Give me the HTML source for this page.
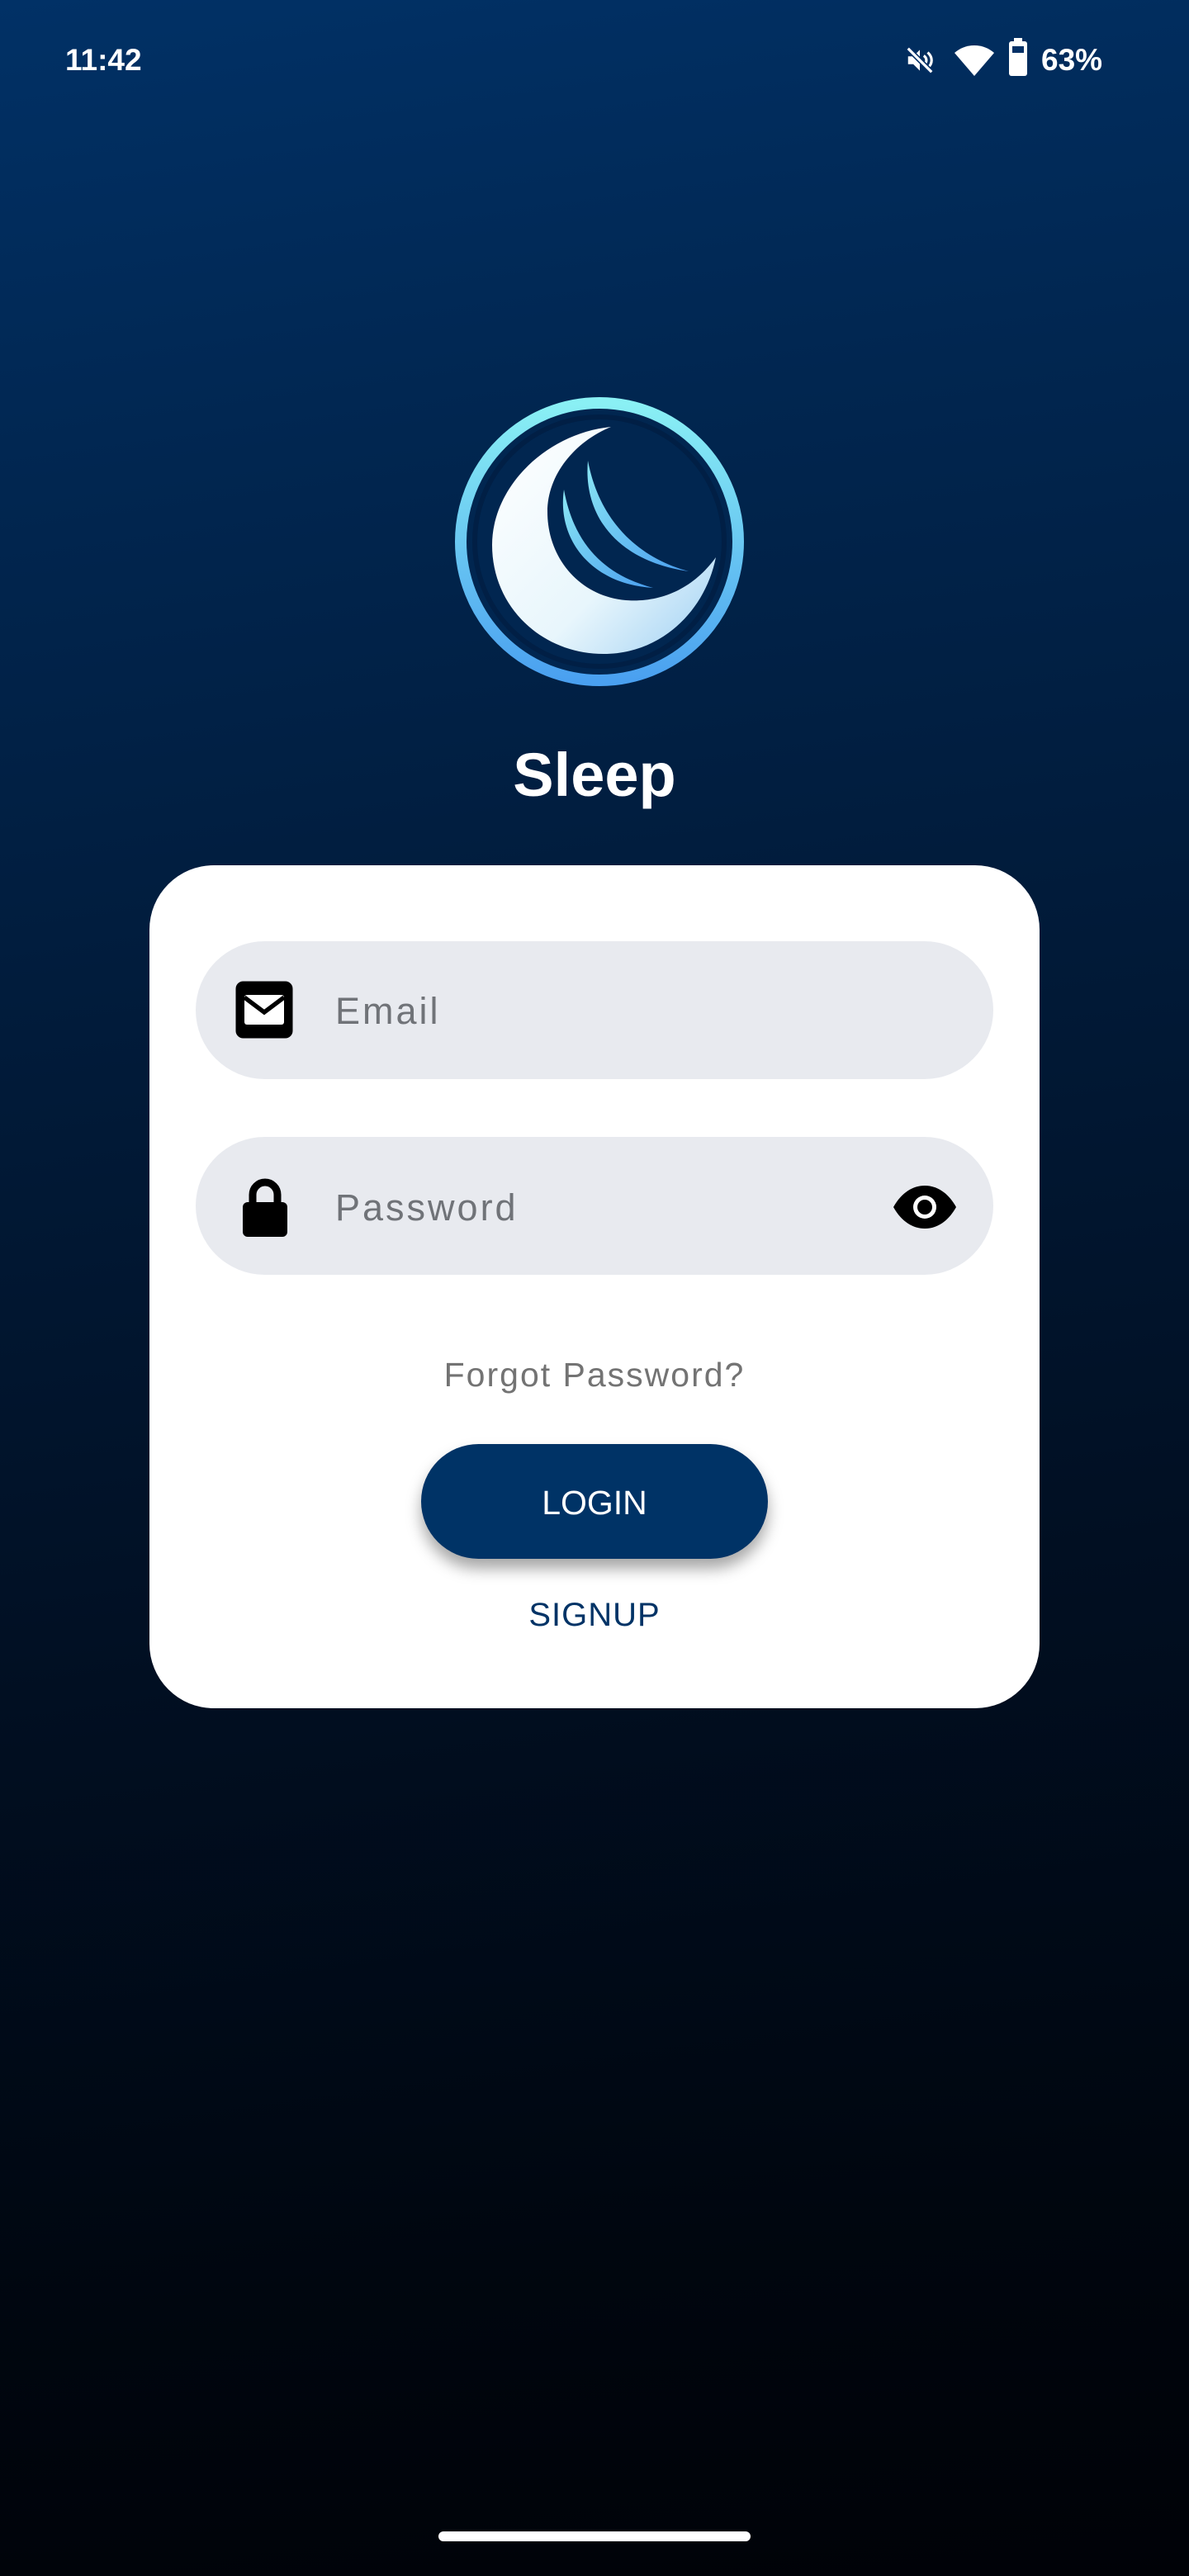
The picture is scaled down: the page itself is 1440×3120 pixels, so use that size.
<!DOCTYPE html>
<html><head><meta charset="utf-8"><style>
html,body{margin:0;padding:0}
body{width:1440px;height:3120px;position:relative;overflow:hidden;font-family:"Liberation Sans",sans-serif;
background:linear-gradient(172deg,#013166 0%,#012650 18%,#011b3a 38%,#010f22 62%,#00060f 85%,#000207 100%);}
.a{position:absolute}
.status{color:#fff;font-size:37px;font-weight:bold;top:52px}
.card{left:181px;top:1048px;width:1078px;height:1021px;background:#fff;border-radius:78px}
.field{left:237px;width:966px;height:167px;background:#e8eaef;border-radius:84px}
.ph{color:#707378;font-size:45px;letter-spacing:3px;left:406px}
.c{width:1440px;left:0;text-align:center}
</style></head><body>
<div class="a status" style="left:79px">11:42</div>
<div class="a" style="left:1094px;top:54px">
<svg width="40" height="38" viewBox="0 0 24 24"><path d="M3 9v6h4l5 5V4L7 9H3z" fill="#fff"/><path d="M15 8.5c1.5 1 2 2.5 2 3.5s-.5 2.5-2 3.5M18 6c2 1.8 3 3.8 3 6s-1 4.2-3 6" stroke="#fff" stroke-width="2" fill="none"/><path d="M3 3l18 18" stroke="#023066" stroke-width="4"/><path d="M3 3l18 18" stroke="#fff" stroke-width="2"/></svg></div>
<div class="a" style="left:1156px;top:54px">
<svg width="48" height="40" viewBox="0 0 24 20"><path d="M12 19L0 5C3 2.3 7.3 0.5 12 0.5S21 2.3 24 5z" fill="#fff"/></svg></div>
<div class="a" style="left:1222px;top:50px;width:22px;height:42px;background:#fff;border-radius:3px"></div>
<div class="a" style="left:1228px;top:46px;width:10px;height:6px;background:#fff"></div>
<div class="a" style="left:1226px;top:56px;width:14px;height:8px;background:#023066"></div>
<div class="a status" style="left:1261px">63%</div>

<svg class="a" style="left:546px;top:480px" width="360" height="360" viewBox="0 0 360 360">
<defs>
<linearGradient id="ring" x1="0" y1="0" x2="0" y2="1"><stop offset="0" stop-color="#8af0f4"/><stop offset="1" stop-color="#4aa0f0"/></linearGradient>
<linearGradient id="moon" x1="0" y1="0" x2="1" y2="1"><stop offset="0" stop-color="#ffffff"/><stop offset="0.6" stop-color="#e8f6fc"/><stop offset="1" stop-color="#9fd0f3"/></linearGradient>
<linearGradient id="arc" x1="0" y1="0" x2="1" y2="1"><stop offset="0" stop-color="#8ae6f4"/><stop offset="1" stop-color="#4a9ff0"/></linearGradient>
</defs>
<circle cx="180" cy="176" r="168" fill="#012650" stroke="url(#ring)" stroke-width="14"/>
<circle cx="180" cy="176" r="151" fill="none" stroke="#011f45" stroke-width="6"/>
<path d="M194 37 C115 45 50 110 50 180 C50 255 110 312 185 312 C255 312 308 260 321 195 C292 235 252 250 212 247 C155 242 117 195 117 140 C117 95 150 55 194 37 Z" fill="url(#moon)"/>
<path d="M137 113 C128 175 172 228 245 232 C192 218 150 185 137 113 Z" fill="url(#arc)"/>
<path d="M166 78 C160 145 202 200 288 212 C228 196 180 152 166 78 Z" fill="url(#arc)"/>
</svg>

<div class="a c" style="top:896px;color:#fff;font-size:74px;font-weight:bold">Sleep</div>

<div class="a card"></div>
<div class="a field" style="top:1140px"></div>
<div class="a field" style="top:1377px"></div>
<svg class="a" style="left:284px;top:1187px" width="72" height="72" viewBox="0 0 24 24"><rect x="0.5" y="0.5" width="23" height="23" rx="3" fill="#000"/><rect x="4" y="6" width="16" height="12" rx="1" fill="#fff"/><path d="M4 7l8 6 8-6" stroke="#000" stroke-width="1.8" fill="none"/></svg>
<div class="a ph" style="top:1199px">Email</div>
<svg class="a" style="left:290px;top:1426px" width="62" height="72" viewBox="0 0 20 24"><path d="M5 11V7a5 5 0 0 1 10 0v4" stroke="#000" stroke-width="3" fill="none"/><rect x="1" y="10" width="18" height="14" rx="2" fill="#000"/></svg>
<div class="a ph" style="top:1437px">Password</div>
<svg class="a" style="left:1080px;top:1434px" width="80" height="56" viewBox="0 0 40 28"><path d="M1 14C6 5 13 1 20 1s14 4 19 13c-5 9-12 13-19 13S6 23 1 14z" fill="#000"/><circle cx="20" cy="14" r="7" fill="#fff"/><circle cx="20" cy="14" r="4.5" fill="#000"/></svg>

<div class="a c" style="top:1642px;color:#737373;font-size:41px;letter-spacing:2px">Forgot Password?</div>
<div class="a" style="left:510px;top:1749px;width:420px;height:139px;background:#003366;border-radius:70px;box-shadow:0 12px 18px rgba(0,0,0,.35);color:#fff;font-size:41px;text-align:center;line-height:142px">LOGIN</div>
<div class="a c" style="top:1934px;color:#003366;font-size:40px;letter-spacing:1px">SIGNUP</div>

<div class="a" style="left:531px;top:3066px;width:378px;height:12px;background:#fff;border-radius:6px"></div>
</body></html>
